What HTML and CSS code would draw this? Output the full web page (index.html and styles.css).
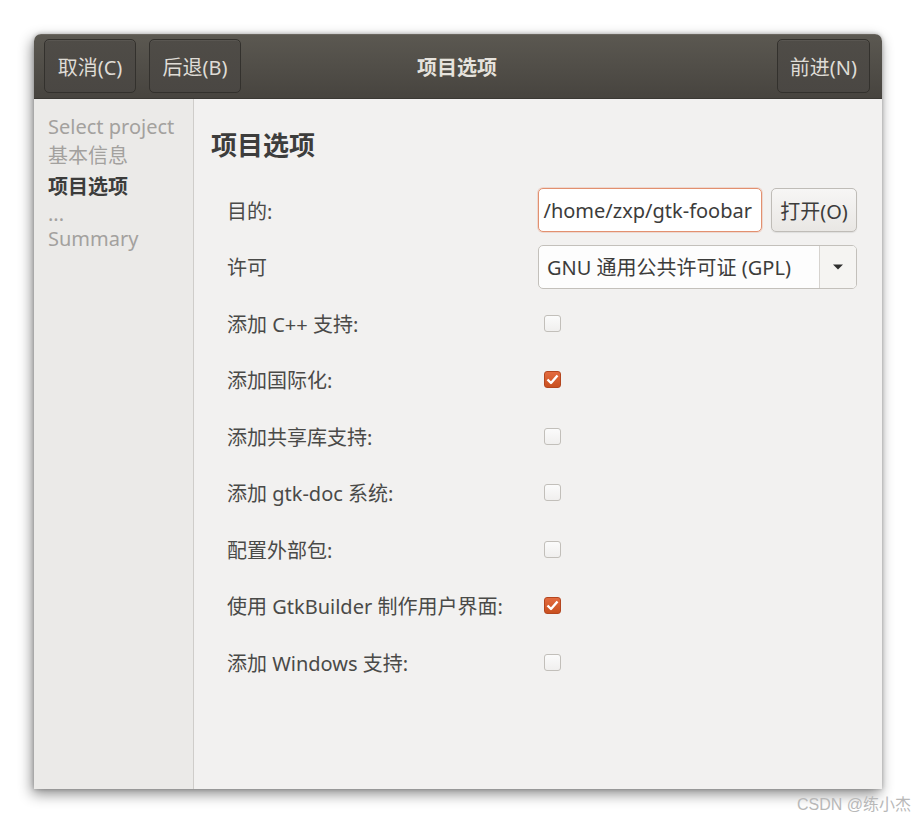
FILE: index.html
```html
<!DOCTYPE html>
<html lang="zh-CN">
<head>
<meta charset="utf-8">
<title>项目选项</title>
<link rel="stylesheet" href="styles.css">
</head>
<body>
<div class="window">
  <header class="headerbar">
    <div class="hb-left">
      <button class="hb-btn">取消(C)</button>
      <button class="hb-btn">后退(B)</button>
    </div>
    <div class="hb-title">项目选项</div>
    <div class="hb-right">
      <button class="hb-btn">前进(N)</button>
    </div>
  </header>
  <div class="body">
    <nav class="sidebar">
      <div class="nav-item">Select project</div>
      <div class="nav-item">基本信息</div>
      <div class="nav-item active">项目选项</div>
      <div class="nav-item dots">...</div>
      <div class="nav-item">Summary</div>
    </nav>
    <main class="content">
      <h1 class="page-title">项目选项</h1>
      <div class="form">
        <div class="label">目的:</div>
        <div class="control">
          <div class="entry"><span class="entry-text">/home/zxp/gtk-foobar</span></div>
          <button class="btn">打开(O)</button>
        </div>

        <div class="label">许可</div>
        <div class="control">
          <div class="combo">
            <span class="combo-text">GNU 通用公共许可证 (GPL)</span>
            <span class="combo-arrow"><svg width="12" height="8" viewBox="0 0 12 8"><path d="M1 1.5 H11 L6 6.5 Z" fill="#2e2e2e"/></svg></span>
          </div>
        </div>

        <div class="label">添加 C++ 支持:</div>
        <div class="control"><span class="check"></span></div>

        <div class="label">添加国际化:</div>
        <div class="control"><span class="check on"><svg width="13" height="11" viewBox="0 0 13 11"><path d="M1.5 5.5 L5 9 L11.5 1.5" fill="none" stroke="#fff" stroke-width="2.4" stroke-linejoin="round"/></svg></span></div>

        <div class="label">添加共享库支持:</div>
        <div class="control"><span class="check"></span></div>

        <div class="label">添加 gtk-doc 系统:</div>
        <div class="control"><span class="check"></span></div>

        <div class="label">配置外部包:</div>
        <div class="control"><span class="check"></span></div>

        <div class="label">使用 GtkBuilder 制作用户界面:</div>
        <div class="control"><span class="check on"><svg width="13" height="11" viewBox="0 0 13 11"><path d="M1.5 5.5 L5 9 L11.5 1.5" fill="none" stroke="#fff" stroke-width="2.4" stroke-linejoin="round"/></svg></span></div>

        <div class="label">添加 Windows 支持:</div>
        <div class="control"><span class="check"></span></div>
      </div>
    </main>
  </div>
</div>
<div class="watermark">CSDN @练小杰</div>
</body>
</html>
```

FILE: styles.css
```css
html, body {
  margin: 0;
  padding: 0;
  background: #ffffff;
}
body {
  width: 916px;
  height: 822px;
  overflow: hidden;
  font-family: "Noto Sans", "Noto Sans CJK SC", sans-serif;
  font-size: 20px;
  color: #4a4a48;
}
.window {
  margin: 34px 0 0 34px;
  width: 848px;
  height: 755px;
  display: flex;
  flex-direction: column;
  border-radius: 7px 7px 0 0;
  box-shadow: -2px 5px 14px rgba(0,0,0,0.45), 0 0 4px rgba(0,0,0,0.25);
  overflow: hidden;
}
.headerbar {
  height: 65px;
  flex: none;
  box-sizing: border-box;
  display: grid;
  grid-template-columns: 1fr auto 1fr;
  align-items: center;
  padding: 0 12px 1px 10px;
  background: linear-gradient(#5b5851, #47443f);
  border-top: 1px solid #6a665f;
  border-bottom: 1px solid #3a3834;
}
.hb-left {
  display: flex;
  gap: 13px;
}
.hb-right {
  display: flex;
  justify-content: flex-end;
}
.hb-btn {
  height: 54px;
  padding: 0 12px;
  min-width: 92px;
  font-family: inherit;
  font-size: 20px;
  color: #dfdcd6;
  background: linear-gradient(#4f4c47, #4a4743);
  border: 1px solid #33312d;
  border-radius: 5px;
  box-shadow: inset 0 1px 0 rgba(255,255,255,0.06);
}
.hb-title {
  font-weight: bold;
  color: #e6e3dd;
  font-size: 20px;
}
.body {
  flex: 1;
  display: flex;
  min-height: 0;
}
.sidebar {
  width: 159px;
  flex: none;
  background: #ebeae8;
  border-right: 1px solid #cfcdca;
  padding: 13px 0 0 14px;
  box-sizing: border-box;
  width: 160px;
}
.nav-item {
  line-height: 29px;
  color: #a3a19e;
  white-space: nowrap;
}
.nav-item.active {
  line-height: 33px;
  font-weight: bold;
  color: #3c3c3b;
}
.nav-item.dots {
  line-height: 21px;
}
.content {
  flex: 1;
  background: #f2f1f0;
  padding: 30px 25px 0 17px;
}
.page-title {
  margin: 0 0 27px 0;
  font-size: 26px;
  line-height: 32px;
  font-weight: bold;
  color: #3d3d3c;
}
.form {
  margin-left: 16px;
  display: grid;
  grid-template-columns: 311px 1fr;
  grid-auto-rows: 44px;
  row-gap: 12.5px;
  align-items: center;
}
.label {
  color: #4a4a48;
  white-space: nowrap;
}
.control {
  display: flex;
  align-items: center;
  gap: 9px;
  height: 44px;
}
.entry {
  width: 224px;
  height: 44px;
  box-sizing: border-box;
  border: 1px solid #e2906f;
  border-radius: 5px;
  background: #ffffff;
  box-shadow: 0 0 0 1px rgba(226,144,111,0.25);
  display: flex;
  align-items: center;
  justify-content: flex-end;
  overflow: hidden;
  padding-right: 9px;
}
.entry-text {
  white-space: nowrap;
  color: #3c3c3b;
  flex: none;
}
.btn {
  width: 86px;
  height: 44px;
  font-family: inherit;
  font-size: 20px;
  color: #3c3c3b;
  background: linear-gradient(#f7f6f5, #e9e7e4);
  border: 1px solid #bfbcb7;
  border-radius: 5px;
  box-shadow: 0 1px 1px rgba(0,0,0,0.08);
  padding: 0;
}
.combo {
  width: 319px;
  height: 44px;
  box-sizing: border-box;
  border: 1px solid #c3c0bb;
  border-radius: 5px;
  background: #fdfdfd;
  display: flex;
  align-items: stretch;
  overflow: hidden;
}
.combo-text {
  flex: 1;
  display: flex;
  align-items: center;
  padding-left: 8px;
  color: #3c3c3b;
  white-space: nowrap;
}
.combo-arrow {
  width: 36px;
  flex: none;
  border-left: 1px solid #d6d3cf;
  background: #f5f4f2;
  display: flex;
  align-items: center;
  justify-content: center;
}
.check {
  margin-left: 6px;
  width: 17px;
  height: 17px;
  box-sizing: border-box;
  border: 1px solid #c2bfba;
  border-radius: 3px;
  background: linear-gradient(#fbfbfb, #f0efee);
  display: flex;
  align-items: center;
  justify-content: center;
}
.check.on {
  border-color: #b4461f;
  background: linear-gradient(#e36b3f, #c9501f);
}
.watermark {
  text-align: right;
  padding-right: 5px;
  margin-top: 6px;
  font-family: "Liberation Sans", "Noto Sans CJK SC", sans-serif;
  font-size: 16px;
  line-height: 20px;
  color: #b8b8b8;
}
```
